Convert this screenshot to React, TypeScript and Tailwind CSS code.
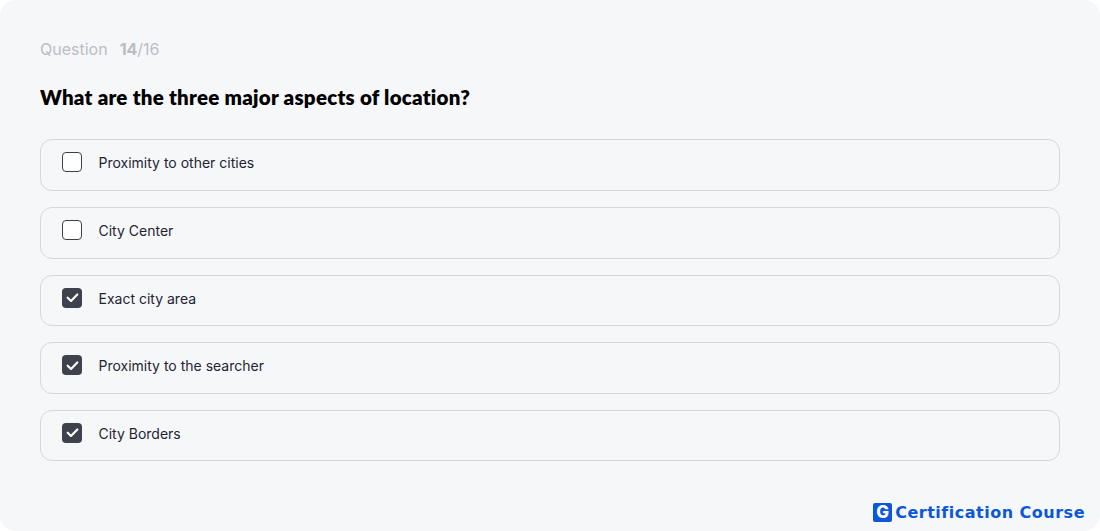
const options = [
  { label: "Proximity to other cities", checked: false },
  { label: "City Center", checked: false },
  { label: "Exact city area", checked: true },
  { label: "Proximity to the searcher", checked: true },
  { label: "City Borders", checked: true },
];

function Checkbox({ checked }: { checked: boolean }) {
  if (checked) {
    return (
      <span className="flex h-5 w-5 shrink-0 items-center justify-center rounded-[4px] bg-[#3e424d]">
        <svg viewBox="0 0 14 14" className="h-[15px] w-[15px]" fill="none">
          <path d="M2.5 7.2 5.6 10.2 11.5 4.2" stroke="#fff" strokeWidth="2" strokeLinecap="round" strokeLinejoin="round" />
        </svg>
      </span>
    );
  }
  return <span className="h-5 w-5 shrink-0 rounded-[4px] border border-[#3c404b] bg-white" />;
}

export default function App() {
  return (
    <div className="h-[531px] w-[1100px] overflow-hidden bg-white font-['Inter',sans-serif]">
      <div className="flex h-full flex-col rounded-2xl bg-[#f6f7f9] px-10 pt-[39px]">
        <p className="flex gap-3 text-base leading-[20px] text-[#bbbdc5]">
          <span>Question</span>
          <span>
            <span className="font-bold">14</span>/16
          </span>
        </p>
        <h1 className="mt-[24px] font-['Lato',sans-serif] text-[20.5px] leading-[28px] font-extrabold tracking-[0.25px] text-black">
          What are the three major aspects of location?
        </h1>
        <div className="mt-[28.35px] flex flex-col gap-4">
          {options.map((o) => (
            <div
              key={o.label}
              className="flex h-[51.6px] items-start gap-[16.5px] rounded-xl border border-[#d5d7dc] pt-3 pl-[21px]"
            >
              <Checkbox checked={o.checked} />
              <span className="mt-[1.05px] text-sm text-[#1f2433]">{o.label}</span>
            </div>
          ))}
        </div>
        <div className="mt-auto mr-[-25px] mb-[8.5px] flex items-center justify-end gap-[3px]">
          <span className="flex h-[19px] w-[19px] items-center justify-center rounded-[2px] bg-[#0b57d8] text-[17px] leading-none font-extrabold text-white">
            G
          </span>
          <span className="font-['DejaVu_Sans',sans-serif] text-[16px] leading-[20px] font-bold tracking-[0.5px] text-[#0b57d8]">
            Certification Course
          </span>
        </div>
      </div>
    </div>
  );
}
